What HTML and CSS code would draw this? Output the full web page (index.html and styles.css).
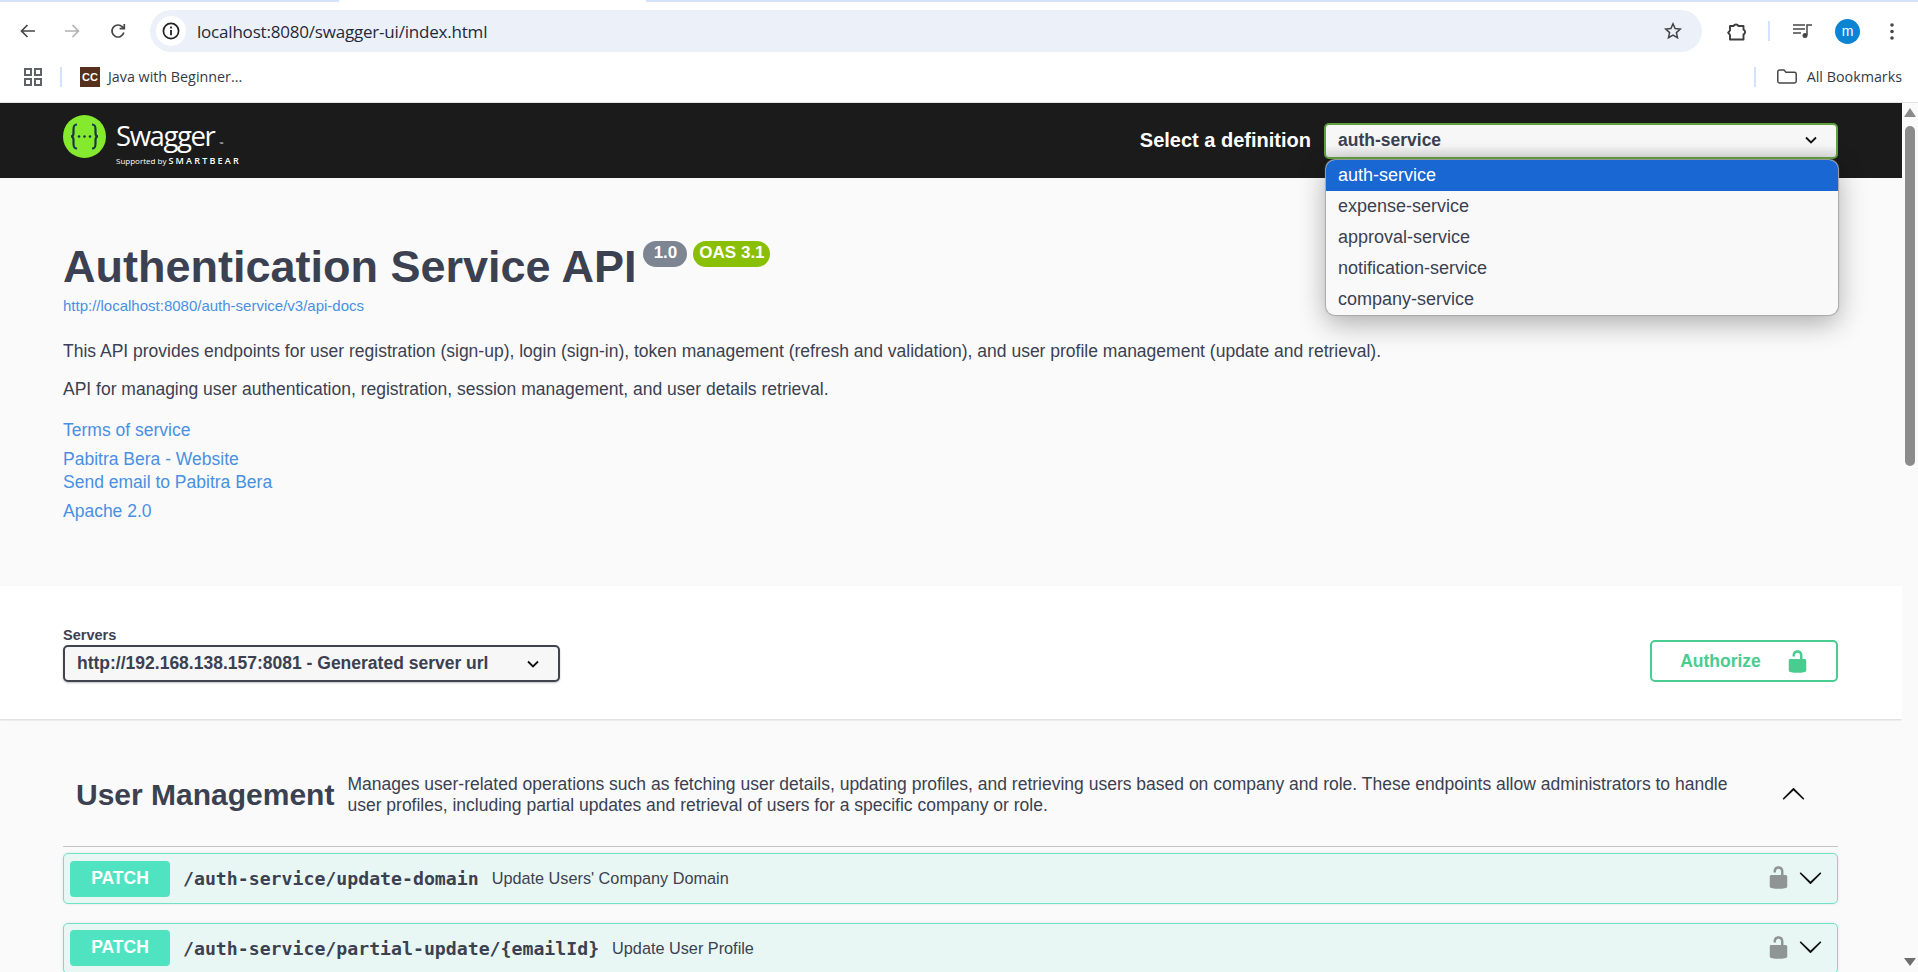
FILE: index.html

```html
<!DOCTYPE html>
<html lang="en">
<head>
  <meta charset="UTF-8">
  <title>Swagger UI</title>
  <link rel="stylesheet" href="styles.css">
</head>
<body>
  <div class="tabstrip"><span class="tab-gap"></span></div>

  <div class="toolbar">
    <svg class="nav-icon" viewBox="0 0 15 14"><path d="M7.500 1 1.500 7l6 6M1.500 7H15" fill="none" stroke="#474747" stroke-width="1.700"/></svg>
    <svg class="nav-icon nav-next" viewBox="0 0 15 14"><path d="M7.500 1l6 6-6 6M13.500 7H0" fill="none" stroke="#b2b2b2" stroke-width="1.700"/></svg>
    <svg class="nav-icon nav-reload" viewBox="0 0 16 16"><path d="M13.800 9.500A6 6 0 1 1 12.300 3.800L14 5.500M14.300 1v4.700H9.600" fill="none" stroke="#474747" stroke-width="1.700"/></svg>
    <div class="omnibox">
      <span class="site-info">
        <svg viewBox="0 0 18 18" width="18" height="18"><circle cx="9" cy="9" r="7.600" fill="none" stroke="#222" stroke-width="1.700"/><path d="M9 8v5.200M9 4.600v1.800" stroke="#222" stroke-width="1.800"/></svg>
      </span>
      <span class="url">localhost:8080/swagger-ui/index.html</span>
      <svg class="star" viewBox="0 0 18 18"><path d="M9 1.800l2.100 4.800 5.200.5-3.900 3.500 1.100 5.100L9 13.100l-4.500 2.600 1.100-5.100-3.900-3.500 5.200-.5z" fill="none" stroke="#444" stroke-width="1.500"/></svg>
    </div>
    <svg class="ext" viewBox="0 0 20 20"><path d="M3 5h3.500a2.800 2.800 0 0 1 5 0H16.500v3.700a2.600 2.600 0 0 1 0 4.800V18.500H3v-4.500l-1.800-2.300L3 9.500z" fill="none" stroke="#3c3c3c" stroke-width="1.900" stroke-linejoin="round"/></svg>
    <span class="tool-sep"></span>
    <svg class="media" viewBox="0 0 20 14"><path d="M0 1h12M0 5h12M0 9h8M14 11V1h5" fill="none" stroke="#474747" stroke-width="1.500"/><circle cx="12" cy="11.500" r="2.500" fill="#474747"/></svg>
    <span class="avatar">m</span>
    <svg class="dots" viewBox="0 0 4 17"><circle cx="2" cy="2" r="1.800" fill="#474747"/><circle cx="2" cy="8.500" r="1.800" fill="#474747"/><circle cx="2" cy="15" r="1.800" fill="#474747"/></svg>
  </div>

  <div class="bookmarks">
    <svg class="apps" viewBox="0 0 18 18"><path d="M1 1h6v6H1zM11 1h6v6h-6zM1 11h6v6H1zM11 11h6v6h-6z" fill="none" stroke="#5f6368" stroke-width="2"/></svg>
    <span class="bm-sep"></span>
    <span class="favicon">CC</span>
    <span class="bm-text">Java with Beginner...</span>
    <span class="bm-spacer"></span>
    <span class="bm-sep"></span>
    <svg class="folder" viewBox="0 0 20 15"><path d="M2.500 1H7l2 2.200h8.500a1.700 1.700 0 0 1 1.700 1.700v7.400a1.700 1.700 0 0 1-1.700 1.700h-15A1.700 1.700 0 0 1 .8 12.300V2.700A1.700 1.700 0 0 1 2.500 1z" fill="none" stroke="#474747" stroke-width="1.500" stroke-linejoin="round"/></svg>
    <span class="bm-text bm-all">All Bookmarks</span>
  </div>

  <div class="viewport">
    <div class="page">
      <header class="topbar">
        <a class="logo">
          <svg class="logo-mark" viewBox="0 0 43 43">
            <circle cx="21.500" cy="21.500" r="21.500" fill="#85ea2d"/>
            <path d="M14 9.500c-3.500 0-3.500 2.500-3.500 5v3.500c0 2-1 3.500-2.500 3.500 1.500 0 2.500 1.500 2.500 3.500v3.500c0 2.500 0 5 3.500 5M29 9.500c3.500 0 3.500 2.500 3.500 5v3.500c0 2 1 3.500 2.500 3.500-1.500 0-2.500 1.500-2.500 3.500v3.500c0 2.500 0 5-3.500 5" fill="none" stroke="#173647" stroke-width="2.200"/>
            <circle cx="16" cy="21.500" r="1.300" fill="#173647"/>
            <circle cx="21.500" cy="21.500" r="1.300" fill="#173647"/>
            <circle cx="27" cy="21.500" r="1.300" fill="#173647"/>
          </svg>
          <span class="logo-text">
            <span class="logo-name">Swagger<span class="logo-tm">™</span></span>
            <span class="logo-sub">Supported by <b>SMARTBEAR</b></span>
          </span>
        </a>
        <label class="def-label">Select a definition</label>
        <div class="def-select">
          <div class="select-box select-green">
            <span>auth-service</span>
            <svg class="select-arrow" viewBox="0 0 12 8"><path d="M1 1.500l5 5 5-5" fill="none" stroke="#111" stroke-width="1.800"/></svg>
          </div>
          <ul class="def-menu">
            <li class="selected">auth-service</li>
            <li>expense-service</li>
            <li>approval-service</li>
            <li>notification-service</li>
            <li>company-service</li>
          </ul>
        </div>
      </header>

      <section class="info">
        <div class="title-row">
          <h1>Authentication Service API</h1>
          <span class="badge badge-version">1.0</span>
          <span class="badge badge-oas">OAS 3.1</span>
        </div>
        <a class="spec-link">http://localhost:8080/auth-service/v3/api-docs</a>
        <p class="first">This API provides endpoints for user registration (sign-up), login (sign-in), token management (refresh and validation), and user profile management (update and retrieval).</p>
        <p>API for managing user authentication, registration, session management, and user details retrieval.</p>
        <a class="link link-terms">Terms of service</a>
        <a class="link link-contact">Pabitra Bera - Website</a>
        <a class="link">Send email to Pabitra Bera</a>
        <a class="link link-license">Apache 2.0</a>
      </section>

      <section class="servers">
        <div class="server-field">
          <span class="server-label">Servers</span>
          <div class="select-box select-dark">
            <span>http://192.168.138.157:8081 - Generated server url</span>
            <svg class="select-arrow" viewBox="0 0 12 8"><path d="M1 1.500l5 5 5-5" fill="none" stroke="#111" stroke-width="1.800"/></svg>
          </div>
        </div>
        <button class="authorize">Authorize
          <svg class="lock" viewBox="0 0 20 20"><path d="M15.800 8H14V5.600C14 2.703 12.665 1 10 1 7.334 1 6 2.703 6 5.600V6h2v-.801C8 3.754 8.797 3 10 3c1.203 0 2 .754 2 2.199V8H4c-.553 0-1 .646-1 1.199V17c0 .549.428 1.139.951 1.307l1.197.387C5.672 18.861 6.550 19 7.100 19h5.800c.549 0 1.428-.139 1.951-.307l1.196-.387c.524-.167.953-.757.953-1.306V9.199C17 8.646 16.352 8 15.800 8z"/></svg>
        </button>
      </section>

      <section class="ops">
        <div class="tag-row">
          <h3>User Management</h3>
          <p>Manages user-related operations such as fetching user details, updating profiles, and retrieving users based on company and role. These endpoints allow administrators to handle user profiles, including partial updates and retrieval of users for a specific company or role.</p>
          <svg class="chevron chevron-up" viewBox="0 0 20 20"><path d="M17.418 6.109c.272-.268.709-.268.979 0s.271.701 0 .969l-7.908 7.830c-.270.268-.707.268-.979 0l-7.908-7.830c-.270-.268-.270-.701 0-.969.271-.268.709-.268.979 0L10 13.250l7.418-7.141z"/></svg>
        </div>

        <div class="op">
          <span class="method">PATCH</span>
          <code>/auth-service/update-domain</code>
          <span class="summary">Update Users' Company Domain</span>
          <svg class="lock op-lock" viewBox="0 0 20 20"><path d="M15.800 8H14V5.600C14 2.703 12.665 1 10 1 7.334 1 6 2.703 6 5.600V6h2v-.801C8 3.754 8.797 3 10 3c1.203 0 2 .754 2 2.199V8H4c-.553 0-1 .646-1 1.199V17c0 .549.428 1.139.951 1.307l1.197.387C5.672 18.861 6.550 19 7.100 19h5.800c.549 0 1.428-.139 1.951-.307l1.196-.387c.524-.167.953-.757.953-1.306V9.199C17 8.646 16.352 8 15.800 8z"/></svg>
          <svg class="chevron" viewBox="0 0 20 20"><path d="M17.418 6.109c.272-.268.709-.268.979 0s.271.701 0 .969l-7.908 7.830c-.270.268-.707.268-.979 0l-7.908-7.830c-.270-.268-.270-.701 0-.969.271-.268.709-.268.979 0L10 13.250l7.418-7.141z"/></svg>
        </div>

        <div class="op">
          <span class="method">PATCH</span>
          <code>/auth-service/partial-update/{emailId}</code>
          <span class="summary">Update User Profile</span>
          <svg class="lock op-lock" viewBox="0 0 20 20"><path d="M15.800 8H14V5.600C14 2.703 12.665 1 10 1 7.334 1 6 2.703 6 5.600V6h2v-.801C8 3.754 8.797 3 10 3c1.203 0 2 .754 2 2.199V8H4c-.553 0-1 .646-1 1.199V17c0 .549.428 1.139.951 1.307l1.197.387C5.672 18.861 6.550 19 7.100 19h5.800c.549 0 1.428-.139 1.951-.307l1.196-.387c.524-.167.953-.757.953-1.306V9.199C17 8.646 16.352 8 15.800 8z"/></svg>
          <svg class="chevron" viewBox="0 0 20 20"><path d="M17.418 6.109c.272-.268.709-.268.979 0s.271.701 0 .969l-7.908 7.830c-.270.268-.707.268-.979 0l-7.908-7.830c-.270-.268-.270-.701 0-.969.271-.268.709-.268.979 0L10 13.250l7.418-7.141z"/></svg>
        </div>
      </section>
    </div>

    <div class="scrollbar">
      <span class="scroll-up"></span>
      <span class="scroll-thumb"></span>
      <span class="scroll-down"></span>
    </div>
  </div>
</body>
</html>
```

FILE: styles.css

```css
* {
  box-sizing: border-box;
}

html, body {
  margin: 0;
  height: 100%;
  overflow: hidden;
}

body {
  font-family: "Liberation Sans", Arial, sans-serif;
  color: #3b4151;
  background: #fff;
  display: flex;
  flex-direction: column;
}

/* browser chrome */
.tabstrip {
  height: 2px;
  background: #d3e3fd;
  flex: none;
}

.tab-gap {
  display: block;
  width: 307px;
  height: 2px;
  margin-left: 339px;
  background: #fff;
}

.toolbar {
  height: 50px;
  flex: none;
  display: flex;
  align-items: center;
  padding: 8px 0 0 20px;
  background: #fff;
}

.nav-icon {
  width: 15px;
  height: 14px;
  flex: none;
}

.nav-next {
  margin-left: 30px;
}

.nav-reload {
  margin-left: 30px;
  width: 16px;
  height: 16px;
}

.omnibox {
  width: 1552px;
  height: 42px;
  margin-left: 24px;
  flex: none;
  display: flex;
  align-items: center;
  padding: 0 20px 0 6px;
  background: #ecf1f9;
  border-radius: 21px;
}

.site-info {
  width: 30px;
  height: 30px;
  border-radius: 50%;
  background: #fff;
  display: flex;
  align-items: center;
  justify-content: center;
}

.url {
  margin-left: 11px;
  font-family: "Open Sans", sans-serif;
  font-size: 17px;
  letter-spacing: -0.2px;
  color: #1f2a3a;
  flex: 1;
}

.star {
  width: 18px;
  height: 18px;
}

.ext {
  width: 20px;
  height: 20px;
  margin-left: 25px;
  flex: none;
}

.tool-sep {
  width: 2px;
  height: 20px;
  margin-left: 21px;
  background: #d3e3fd;
  flex: none;
}

.media {
  width: 20px;
  height: 14px;
  margin-left: 23px;
  flex: none;
}

.avatar {
  width: 25px;
  height: 25px;
  margin-left: 22px;
  border-radius: 50%;
  background: #0b84d4;
  color: #fff;
  font-size: 14px;
  line-height: 24px;
  text-align: center;
  flex: none;
}

.dots {
  width: 4px;
  height: 17px;
  margin-left: 30px;
  flex: none;
}

.bookmarks {
  height: 51px;
  flex: none;
  display: flex;
  align-items: center;
  padding: 0 16px 1px 24px;
  background: #fff;
  border-bottom: 1px solid #e3e3e3;
}

.apps {
  width: 18px;
  height: 18px;
}

.bm-sep {
  width: 2px;
  height: 20px;
  margin-left: 18px;
  background: #d3e3fd;
}

.favicon {
  width: 20px;
  height: 20px;
  margin-left: 18px;
  background: #55301c;
  color: #fff;
  font-size: 11px;
  font-weight: bold;
  line-height: 20px;
  text-align: center;
}

.bm-text {
  margin-left: 8px;
  font-family: "Open Sans", sans-serif;
  font-size: 14.300px;
  line-height: 18px;
  color: #333b48;
}

.bm-spacer {
  flex: 1;
}

.folder {
  width: 20px;
  height: 15px;
  margin-left: 21px;
}

.bm-all {
  margin-left: 10px;
}

/* page area */
.viewport {
  flex: 1;
  min-height: 0;
  display: flex;
}

.page {
  flex: 1;
  min-width: 0;
  overflow: hidden;
  background: #fafafa;
}

.scrollbar {
  width: 16px;
  flex: none;
  position: relative;
  background: #fafafa;
}

.scroll-up,
.scroll-down {
  position: absolute;
  left: 2px;
  width: 0;
  height: 0;
  border-left: 6px solid transparent;
  border-right: 6px solid transparent;
}

.scroll-up {
  top: 5px;
  border-bottom: 9px solid #8a8a8a;
}

.scroll-down {
  bottom: 6px;
  border-top: 8px solid #6e6e6e;
}

.scroll-thumb {
  position: absolute;
  top: 23px;
  left: 3px;
  width: 10px;
  height: 340px;
  border-radius: 5px;
  background: #8b8b8b;
}

/* swagger top bar */
.topbar {
  height: 75px;
  display: flex;
  align-items: center;
  padding: 0 64px 0 63px;
  background: #1b1b1b;
}

.logo {
  display: flex;
  align-items: flex-start;
  margin-right: auto;
}

.logo-mark {
  width: 43px;
  height: 43px;
  flex: none;
}

.logo-text {
  margin-left: 10px;
  display: flex;
  flex-direction: column;
  color: #fff;
}

.logo-name {
  margin-top: 2px;
  font-family: "Open Sans", sans-serif;
  font-size: 27.500px;
  font-weight: 400;
  letter-spacing: -1.400px;
}

.logo-tm {
  margin-left: 5px;
  font-size: 5px;
  letter-spacing: 0;
}

.logo-sub {
  margin-top: 2px;
  font-family: "Open Sans", sans-serif;
  font-size: 8px;
  line-height: 10px;
  white-space: nowrap;
}

.logo-sub b {
  font-weight: 600;
  letter-spacing: 2.200px;
  font-size: 9px;
}

.def-label {
  font-size: 20px;
  font-weight: bold;
  color: #fff;
  margin-right: 13px;
}

.def-select {
  position: relative;
  width: 514px;
  margin-top: 1px;
}

.select-box {
  display: flex;
  align-items: center;
  justify-content: space-between;
  font-size: 17.500px;
  font-weight: bold;
  color: #3b4151;
  background: #f7f7f7;
  border-radius: 5px;
}

.select-green {
  height: 36px;
  padding: 0 19px 2px 12px;
  border: 2px solid #62a03f;
  background: linear-gradient(#f7f7f7 65%, #dedede);
}

.select-dark {
  width: 497px;
  height: 37px;
  padding: 0 19px 0 12px;
  border: 2px solid #41444e;
  box-shadow: 0 1px 2px rgba(0, 0, 0, 0.25);
}

.select-arrow {
  width: 12px;
  height: 8px;
  flex: none;
}

.def-menu {
  position: absolute;
  top: 100%;
  left: 2px;
  right: 0;
  margin: 1px 0 0;
  padding: 0;
  list-style: none;
  background: #f9f9f9;
  border-radius: 9px;
  overflow: hidden;
  box-shadow: 0 0 1px 1px #a8a8a8, 0 8px 28px rgba(0, 0, 0, 0.32);
  font-size: 18px;
  z-index: 2;
}

.def-menu li {
  height: 31px;
  line-height: 30px;
  padding-left: 12px;
}

.def-menu .selected {
  background: #1967d2;
  color: #fff;
}

/* info block */
.info {
  height: 408px;
  padding: 62px 64px 0 63px;
  font-size: 17.500px;
}

.title-row {
  display: flex;
  align-items: flex-start;
}

h1 {
  margin: 0;
  font-size: 45px;
  line-height: 54px;
  font-weight: bold;
  color: #3b4151;
}

.badge {
  height: 26px;
  margin-top: 1px;
  border-radius: 13px;
  color: #fff;
  font-size: 17px;
  font-weight: bold;
  line-height: 24px;
  text-align: center;
}

.badge-version {
  width: 44px;
  margin-left: 7px;
  background: #7d8492;
}

.badge-oas {
  width: 77px;
  margin-left: 6px;
  background: #89bf04;
}

.spec-link {
  display: block;
  margin-top: 2px;
  font-size: 15px;
  line-height: 20px;
  color: #4990e2;
}

.info p {
  margin: 0;
  line-height: 21px;
}

.info .first {
  margin-top: 25px;
}

.info p + p {
  margin-top: 17px;
}

.link {
  display: block;
  line-height: 23px;
  color: #4990e2;
}

.link-terms {
  margin-top: 19px;
}

.link-contact {
  margin-top: 6px;
}

.link-license {
  margin-top: 6px;
}

/* servers */
.servers {
  height: 133px;
  display: flex;
  align-items: flex-start;
  justify-content: space-between;
  padding: 41px 64px 0 63px;
  background: #fff;
  box-shadow: 0 1px 2px 0 rgba(0, 0, 0, 0.15);
}

.server-field {
  display: flex;
  flex-direction: column;
}

.server-label {
  margin-bottom: 2px;
  font-size: 14.500px;
  font-weight: bold;
  line-height: 16px;
}

.authorize {
  width: 188px;
  height: 42px;
  margin-top: 13px;
  display: flex;
  align-items: center;
  justify-content: center;
  gap: 24px;
  padding: 0 0 0 2px;
  background: transparent;
  border: 2px solid #49cc90;
  border-radius: 5px;
  color: #49cc90;
  font-family: inherit;
  font-size: 17.500px;
  font-weight: bold;
}

.lock {
  width: 25px;
  height: 25px;
  flex: none;
  fill: #49cc90;
}

/* operations */
.ops {
  padding: 0 64px 0 63px;
}

.tag-row {
  height: 128px;
  display: flex;
  align-items: center;
  padding-left: 13px;
  padding-top: 24px;
  border-bottom: 1px solid #c2c4c7;
}

h3 {
  margin: 0;
  font-size: 30px;
  font-weight: bold;
  color: #3b4151;
  white-space: nowrap;
}

.tag-row p {
  flex: 1;
  margin: 0 35px 0 13px;
  font-size: 17.500px;
  line-height: 21px;
}

.chevron {
  width: 25px;
  height: 25px;
  flex: none;
  fill: #111;
}

.chevron-up {
  margin-right: 32px;
  transform: rotate(180deg);
}

.op {
  height: 51px;
  margin-top: 6px;
  display: flex;
  align-items: center;
  padding: 0 14px 0 6px;
  background: #e9f7f4;
  border: 1px solid #6fe3c8;
  border-radius: 5px;
  box-shadow: 0 0 3px rgba(0, 0, 0, 0.1);
}

.op + .op {
  margin-top: 19px;
  padding-bottom: 1px;
}

.method {
  width: 100px;
  height: 36px;
  flex: none;
  border-radius: 4px;
  background: #50e3c2;
  color: #fff;
  font-size: 17.500px;
  font-weight: bold;
  line-height: 35px;
  text-align: center;
}

.op code {
  margin-left: 13px;
  font-family: "DejaVu Sans Mono", monospace;
  font-size: 18.200px;
  font-weight: bold;
  color: #3b4151;
}

.summary {
  margin-left: 13px;
  font-size: 16.250px;
  color: #3b4151;
  flex: 1;
}

.op-lock {
  margin-bottom: 2px;
  fill: #8f9594;
}

.op .chevron {
  margin-left: 7px;
  margin-bottom: 3px;
}
```
